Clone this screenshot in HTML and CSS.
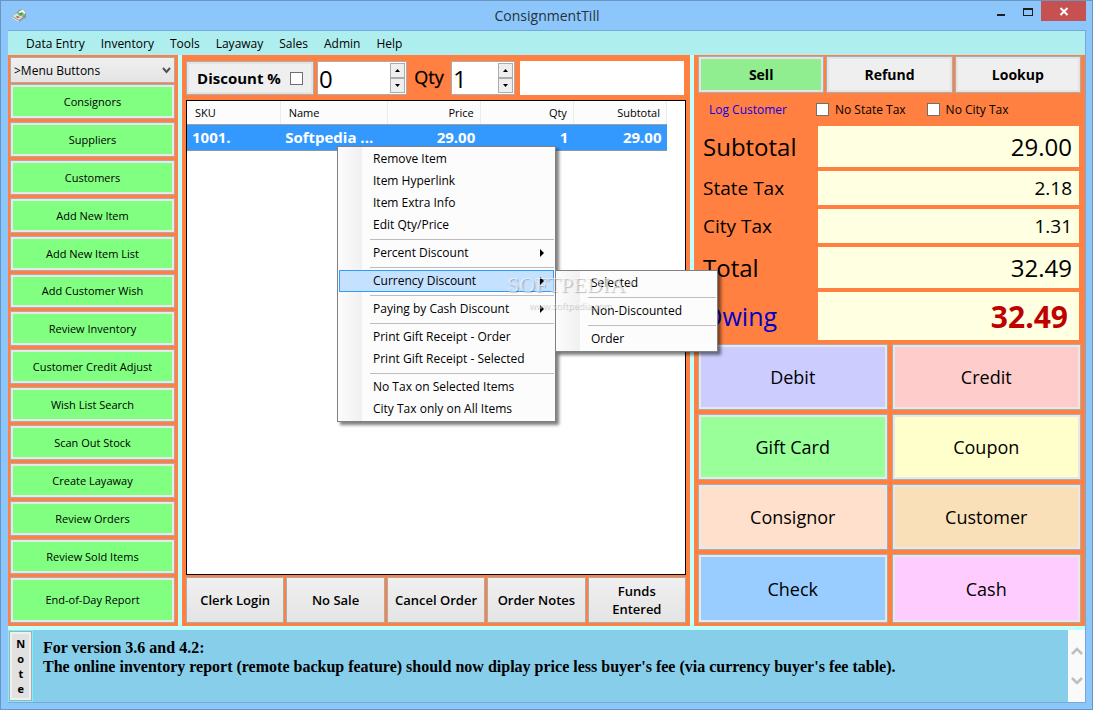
FILE: index.html
```html
<!DOCTYPE html>
<html lang="en">
<head>
  <meta charset="UTF-8">
  <meta name="viewport" content="width=device-width, initial-scale=1.0">
  <title>ConsignmentTill</title>
  <link rel="stylesheet" href="styles.css">
</head>
<body>
  <div class="window">
    <header class="titlebar">
      <svg class="app-icon" width="16" height="14" viewBox="0 0 16 14" aria-hidden="true">
        <path d="M1 7l4-3 3-3 4-1 3 4v5l-3 1-4 3-7-4z" fill="#8f9592"/>
        <path d="M1 7l5-3 6 4-4 3z" fill="#d8dcda"/>
        <path d="M7 3l5-3 3 4-4 3z" fill="#f4f7f4" stroke="#8c9a92" stroke-width=".5"/>
        <path d="M7 5l4-2 2 2-4 2z" fill="#35b54a"/>
        <path d="M6 7l3 1-2 1-2-1z" fill="#c24a32"/>
        <path d="M1 8l7 4v1L1 9z" fill="#f2f2f2"/>
      </svg>
      <h1>ConsignmentTill</h1>
      <div class="window-buttons">
        <button type="button" aria-label="Minimize"><svg width="12" height="12"><path d="M2 9h8v2H2z" fill="#1e1e1e"/></svg></button>
        <button type="button" aria-label="Maximize"><svg width="12" height="12"><path d="M1 3h10v8H1zM2 5v5h8V5z" fill="#1e1e1e" fill-rule="evenodd"/></svg></button>
        <button type="button" class="close" aria-label="Close"><svg width="10" height="10"><path d="M1.500 2l7 7M8.500 2l-7 7" stroke="#fff" stroke-width="2"/></svg></button>
      </div>
    </header>

    <div class="client">
      <nav class="menubar">
        <button type="button">Data Entry</button>
        <button type="button">Inventory</button>
        <button type="button">Tools</button>
        <button type="button">Layaway</button>
        <button type="button">Sales</button>
        <button type="button">Admin</button>
        <button type="button">Help</button>
      </nav>

      <main class="panels">
        <section class="panel sidebar">
          <select aria-label="Button set">
            <option>&gt;Menu Buttons</option>
          </select>
          <button type="button">Consignors</button>
          <button type="button">Suppliers</button>
          <button type="button">Customers</button>
          <button type="button">Add New Item</button>
          <button type="button">Add New Item List</button>
          <button type="button">Add Customer Wish</button>
          <button type="button">Review Inventory</button>
          <button type="button">Customer Credit Adjust</button>
          <button type="button">Wish List Search</button>
          <button type="button">Scan Out Stock</button>
          <button type="button">Create Layaway</button>
          <button type="button">Review Orders</button>
          <button type="button">Review Sold Items</button>
          <button type="button" class="tall">End-of-Day Report</button>
        </section>

        <section class="panel order">
          <div class="entry">
            <label class="discount-toggle">Discount % <input type="checkbox"></label>
            <div class="spinner discount">
              <input type="text" inputmode="numeric" value="0" aria-label="Discount amount">
              <div class="steps">
                <button type="button" aria-label="Increase discount"><svg width="5" height="3"><path d="M0 3h5L2.500 0z"/></svg></button>
                <button type="button" aria-label="Decrease discount"><svg width="5" height="3"><path d="M0 0h5L2.500 3z"/></svg></button>
              </div>
            </div>
            <label class="qty-label" for="qty">Qty</label>
            <div class="spinner qty">
              <input type="text" inputmode="numeric" id="qty" value="1">
              <div class="steps">
                <button type="button" aria-label="Increase quantity"><svg width="5" height="3"><path d="M0 3h5L2.500 0z"/></svg></button>
                <button type="button" aria-label="Decrease quantity"><svg width="5" height="3"><path d="M0 0h5L2.500 3z"/></svg></button>
              </div>
            </div>
            <input type="text" class="scan" aria-label="SKU">
          </div>

          <div class="list">
            <table>
              <thead>
                <tr><th>SKU</th><th>Name</th><th class="num">Price</th><th class="num">Qty</th><th class="num">Subtotal</th></tr>
              </thead>
              <tbody>
                <tr><td>1001.</td><td>Softpedia ...</td><td class="num">29.00</td><td class="num">1</td><td class="num">29.00</td></tr>
              </tbody>
            </table>

            <ul class="menu context">
              <li><button type="button">Remove Item</button></li>
              <li><button type="button">Item Hyperlink</button></li>
              <li><button type="button">Item Extra Info</button></li>
              <li><button type="button">Edit Qty/Price</button></li>
              <li class="sep"></li>
              <li><button type="button">Percent Discount <svg width="4" height="8"><path d="M0 0v8l4-4z"/></svg></button></li>
              <li class="sep"></li>
              <li class="open">
                <button type="button">Currency Discount <svg width="4" height="8"><path d="M0 0v8l4-4z"/></svg></button>
                <ul class="menu submenu">
                  <li><button type="button">Selected</button></li>
                  <li class="sep"></li>
                  <li><button type="button">Non-Discounted</button></li>
                  <li class="sep"></li>
                  <li><button type="button">Order</button></li>
                </ul>
                <div class="watermark">
                  <span class="mark-name">SOFTPEDIA<sup>™</sup></span>
                  <span class="mark-url">www.softpedia.com</span>
                </div>
              </li>
              <li class="sep"></li>
              <li><button type="button">Paying by Cash Discount <svg width="4" height="8"><path d="M0 0v8l4-4z"/></svg></button></li>
              <li class="sep"></li>
              <li><button type="button">Print Gift Receipt - Order</button></li>
              <li><button type="button">Print Gift Receipt - Selected</button></li>
              <li class="sep"></li>
              <li><button type="button">No Tax on Selected Items</button></li>
              <li><button type="button">City Tax only on All Items</button></li>
            </ul>
          </div>

          <div class="order-actions">
            <button type="button">Clerk Login</button>
            <button type="button">No Sale</button>
            <button type="button">Cancel Order</button>
            <button type="button">Order Notes</button>
            <button type="button">Funds Entered</button>
          </div>
        </section>

        <section class="panel till">
          <div class="modes">
            <button type="button" class="active">Sell</button>
            <button type="button">Refund</button>
            <button type="button">Lookup</button>
          </div>
          <div class="options">
            <a href="#">Log Customer</a>
            <label><input type="checkbox"> No State Tax</label>
            <label><input type="checkbox"> No City Tax</label>
          </div>
          <div class="totals">
            <label for="subtotal" class="large">Subtotal</label>
            <input type="text" id="subtotal" class="large" value="29.00" readonly>
            <label for="state-tax">State Tax</label>
            <input type="text" id="state-tax" value="2.18" readonly>
            <label for="city-tax">City Tax</label>
            <input type="text" id="city-tax" value="1.31" readonly>
            <label for="total" class="large">Total</label>
            <input type="text" id="total" class="large" value="32.49" readonly>
            <label for="owing" class="owing">Owing</label>
            <input type="text" id="owing" class="owing" value="32.49" readonly>
          </div>
          <div class="payments">
            <button type="button" class="debit">Debit</button>
            <button type="button" class="credit">Credit</button>
            <button type="button" class="gift">Gift Card</button>
            <button type="button" class="coupon">Coupon</button>
            <button type="button" class="consignor">Consignor</button>
            <button type="button" class="customer">Customer</button>
            <button type="button" class="check">Check</button>
            <button type="button" class="cash">Cash</button>
          </div>
        </section>
      </main>

      <footer class="notes">
        <button type="button" class="note-button">Note</button>
        <p>For version 3.6 and 4.2:<br>The online inventory report (remote backup feature) should now diplay price less buyer's fee (via currency buyer's fee table).</p>
        <div class="scroll">
          <button type="button" aria-label="Scroll up"><svg width="12" height="10"><path d="M1 8l5-5 5 5" /></svg></button>
          <button type="button" aria-label="Scroll down"><svg width="12" height="10"><path d="M1 2l5 5 5-5" /></svg></button>
        </div>
      </footer>
    </div>
  </div>
</body>
</html>
```
FILE: styles.css
```css
* {
  box-sizing: border-box;
}
body {
  margin: 0;
  font-family: "Open Sans", "Noto Sans", sans-serif;
  font-size: 12px;
  color: #000;
}
button,
input,
select {
  font: inherit;
  color: inherit;
  margin: 0;
}
button {
  padding: 0;
  border: 1px solid #acacac;
  background: #efefef;
}
input[type="text"] {
  min-width: 0;
  border: 0;
  border-radius: 0;
  background: #fff;
}
input[type="checkbox"] {
  appearance: none;
  width: 13px;
  height: 13px;
  border: 1px solid #707070;
  background: #fff;
}

/* window frame */
.window {
  display: flex;
  flex-direction: column;
  min-height: 100vh;
  padding: 0 6px 6px 7px;
  border: 1px solid #6a96c3;
  background: #8cc6fa;
}
.titlebar {
  display: flex;
  align-items: center;
  height: 29px;
}
.app-icon {
  margin-left: 3px;
}
.titlebar h1 {
  flex: 1;
  margin: 0;
  padding-left: 80px;
  font-size: 14px;
  font-weight: 400;
  text-align: center;
  color: #26323d;
}
.window-buttons {
  display: flex;
  align-self: flex-start;
}
.window-buttons button {
  display: flex;
  align-items: center;
  justify-content: center;
  width: 27px;
  height: 20px;
  border: 0;
  background: none;
}
.window-buttons .close {
  width: 45px;
  background: #c75050;
}
.client {
  flex: 1;
  display: flex;
  flex-direction: column;
  border: 1px solid #74a9dc;
  border-width: 1px 1px 1px 0;
  background: #bfffff;
}
.menubar {
  display: flex;
  gap: 16px;
  height: 24px;
  padding-left: 18px;
  background: #afeeee;
}
.menubar button {
  border: 0;
  background: none;
}

/* panels */
.panels {
  flex: 1;
  display: grid;
  grid-template-columns: 170fr 508fr 391fr;
  gap: 4px;
}
.panel {
  display: flex;
  flex-direction: column;
  min-width: 0;
  background: #ff8040;
}
.sidebar {
  gap: 3px;
  padding: 2px 3px 3px 2px;
  font-size: 11px;
}
.sidebar select {
  appearance: none;
  height: 26px;
  margin-bottom: -2px;
  padding: 0 3px;
  border: 1px solid #acacac;
  border-radius: 0;
  font-size: 12px;
  background: url("data:image/svg+xml,%3Csvg xmlns='http://www.w3.org/2000/svg' width='9' height='7'%3E%3Cpath d='M1 1l3.500 4L8 1' fill='none' stroke='%23505050' stroke-width='2'/%3E%3C/svg%3E") no-repeat right 3px center, linear-gradient(#f0f0f0, #e4e4e4);
}
.sidebar button {
  flex: 35 1 0;
  background: #80ff80;
  box-shadow: inset 0 0 0 2px #e8e8e8;
}
.sidebar .tall {
  flex-grow: 47;
}

.order {
  padding: 6px 4px 3px;
}
.entry {
  display: flex;
  height: 34px;
  margin-bottom: 5px;
}
.discount-toggle {
  display: flex;
  align-items: center;
  justify-content: center;
  gap: 9px;
  width: 128px;
  margin-right: 3px;
  border: 1px solid #acacac;
  background: #efefef;
  box-shadow: inset 0 0 0 2px #e4e4e4;
  font-size: 15px;
  font-weight: 700;
}
.spinner {
  display: flex;
  border: 1px solid #acacac;
  background: #fff;
}
.spinner input {
  flex: 1;
  width: 0;
  padding: 0 1px;
  font-size: 24px;
}
.spinner.discount {
  width: 90px;
}
.spinner.qty {
  width: 64px;
  margin-right: 5px;
}
.steps {
  display: flex;
  flex-direction: column;
  width: 16px;
  padding: 1px 1px 1px 0;
}
.steps button {
  flex: 1;
  display: flex;
  align-items: center;
  justify-content: center;
}
.qty-label {
  width: 44px;
  text-align: center;
  font-size: 18px;
  line-height: 32px;
  -webkit-text-stroke: 0.3px #000;
}
.scan {
  flex: 1;
  margin-right: 2px;
}

/* order list */
.list {
  position: relative;
  flex: 1;
  border: 1px solid #000;
  background: #fff;
}
.list table {
  width: calc(100% - 18px);
  table-layout: fixed;
  border-collapse: collapse;
}
.list th {
  height: 23px;
  padding: 0 6px 0 8px;
  border-right: 1px solid #e3edf8;
  border-bottom: 1px solid #a0a0a0;
  background: #fcfcfc;
  font-size: 11px;
  font-weight: 400;
  text-align: left;
}
.list th:nth-child(2) {
  width: 107px;
}
.list td {
  height: 26px;
  padding: 0 5px;
  border-bottom: 1px solid #8a97a5;
  background: #3399ff;
  color: #fff;
  font-size: 15px;
  font-weight: 700;
  line-height: 20px;
  white-space: nowrap;
}
.list .num {
  text-align: right;
}
.order-actions {
  display: grid;
  grid-template-columns: repeat(5, 1fr);
  gap: 2px;
  height: 46px;
  margin-top: 2px;
}
.order-actions button {
  padding: 0 16px;
  background: linear-gradient(#f0f0f0, #e4e4e4);
  font-size: 13px;
  font-weight: 600;
  line-height: 18px;
}
.order-actions button:not(:last-child) {
  padding: 0;
}

/* context menu */
.menu {
  position: absolute;
  z-index: 1;
  margin: 0;
  padding: 1px;
  list-style: none;
  border: 1px solid #808080;
  background: linear-gradient(90deg, #fcfcfc, #f0f0f0 24px, #fcfcfc 24px);
  box-shadow: 3px 3px 3px rgba(0, 0, 0, 0.5);
}
.menu li {
  position: relative;
}
.menu button {
  display: flex;
  align-items: center;
  justify-content: space-between;
  width: 100%;
  height: 22px;
  padding: 0 9px 0 33px;
  border: 1px solid transparent;
  background: none;
  text-align: left;
  line-height: 16px;
  white-space: nowrap;
}
.menu .open > button {
  border-color: #3399ff;
  background: #c4e1ff;
}
.menu .sep {
  height: 6px;
  padding-top: 3px;
}
.menu .sep::before {
  content: "";
  display: block;
  height: 1px;
  margin-left: 31px;
  background: #bdbdbd;
}
.context {
  top: 45px;
  left: 150px;
  width: 219px;
}
.submenu {
  top: 0;
  left: calc(100% + 1px);
  width: 163px;
}
.watermark {
  position: absolute;
  z-index: 2;
  top: 3px;
  left: 168px;
  display: flex;
  flex-direction: column;
  align-items: center;
  color: rgba(255, 255, 255, 0.6);
  text-shadow: 1px 1px 1px rgba(0, 0, 0, 0.25);
  font-family: "Liberation Serif", serif;
  pointer-events: none;
}
.mark-name {
  font-size: 22px;
  line-height: 24px;
}
.mark-name sup {
  font-size: 8px;
  vertical-align: top;
}
.mark-url {
  font-family: "Open Sans", sans-serif;
  font-size: 9px;
  line-height: 18px;
}

/* till */
.till {
  padding: 1px 4px 3px;
}
.modes {
  display: grid;
  grid-template-columns: repeat(3, 1fr);
  gap: 2px;
  height: 37px;
}
.modes button {
  box-shadow: inset 0 0 0 2px #e4e4e4;
  font-size: 14px;
  font-weight: 700;
}
.modes .active {
  background: #90ee90;
}
.options {
  display: flex;
  align-items: center;
  height: 33px;
  padding-left: 11px;
}
.options a {
  width: 107px;
  color: #1000e0;
  text-decoration: none;
}
.options label {
  display: flex;
  align-items: center;
  gap: 6px;
  margin-right: 21px;
}
.totals {
  display: grid;
  grid-template-columns: 120fr 261fr;
  grid-template-rows: 41px 34px 34px 41px 48px;
  row-gap: 4px;
  align-items: center;
  padding-right: 2px;
  font-size: 19px;
}
.totals label {
  padding-left: 5px;
}
.totals input {
  width: 100%;
  height: 100%;
  padding: 0 7px;
  background: #ffffe1;
  text-align: right;
}
.totals .large {
  font-size: 24px;
}
.totals label.owing {
  font-size: 25px;
  color: #0000c8;
}
.totals input.owing {
  padding-right: 11px;
  font-size: 30px;
  font-weight: 700;
  color: #c00000;
}
.payments {
  flex: 1;
  display: grid;
  grid-template-columns: 1fr 1fr;
  grid-template-rows: 66fr 66fr 66fr 69fr;
  gap: 4px;
  margin-top: 4px;
}
.payments button {
  box-shadow: inset 0 0 0 2px #e8e8e8;
  font-size: 18px;
}
.payments .debit { background: #ccccff; }
.payments .credit { background: #ffcccc; }
.payments .gift { background: #99ff99; }
.payments .coupon { background: #ffffcc; }
.payments .consignor { background: #ffe0cc; }
.payments .customer { background: #fae0b8; }
.payments .check { background: #99ccff; }
.payments .cash { background: #ffccff; }

/* notes */
.notes {
  display: flex;
  height: 72px;
  margin-top: 4px;
  background: #87ceeb;
}
.note-button {
  width: 23px;
  margin: 1px;
  background: #e1e1e1;
  box-shadow: inset 0 0 0 2px #efefef, 0 0 0 1px #70f5ff;
  font-size: 11px;
  font-weight: 700;
  line-height: 15px;
  writing-mode: vertical-lr;
  text-orientation: upright;
}
.notes p {
  flex: 1;
  margin: 0;
  padding: 8px 10px;
  font-family: "Liberation Serif", serif;
  font-size: 16px;
  font-weight: 700;
  line-height: 19px;
}
.scroll {
  display: flex;
  flex-direction: column;
  justify-content: center;
  gap: 20px;
  width: 17px;
  background: #fafafa;
}
.scroll button {
  height: 10px;
  border: 0;
  background: none;
  line-height: 0;
}
.scroll path {
  fill: none;
  stroke: #bfbfbf;
  stroke-width: 2.5;
}
```
